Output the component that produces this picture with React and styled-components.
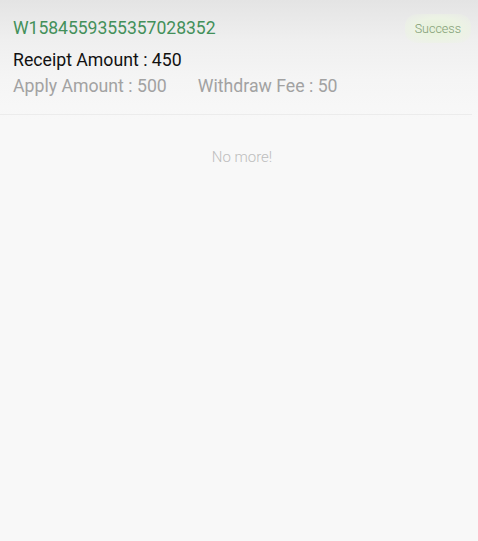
import styled, { createGlobalStyle } from "styled-components";

const GlobalStyle = createGlobalStyle`
  html, body {
    margin: 0;
    padding: 0;
    background: #f8f8f8;
  }
  body {
    font-family: Roboto, "Liberation Sans", sans-serif;
  }
`;

const Page = styled.div`
  width: 478px;
  height: 541px;
  background: linear-gradient(to bottom, #e4e4e4 0px, #efefef 40px, #f5f5f5 80px, #f8f8f8 120px);
  overflow: hidden;
`;

const Card = styled.div`
  margin-right: 6px;
  padding: 16px 0 15px 13px;
  border-bottom: 1px solid #ececec;
`;

const TopRow = styled.div`
  display: flex;
  align-items: center;
  justify-content: space-between;
  height: 24px;
`;

const OrderNo = styled.div`
  font-size: 17.6px;
  color: #43905a;
  letter-spacing: -0.05px;
`;

const Badge = styled.div`
  font-size: 12.5px;
  font-weight: 300;
  color: #7f9b73;
  padding: 7px 10px;
  margin-right: 1px;
  border-radius: 12px;
  background: radial-gradient(ellipse at center, #e5f1d9 0%, #ecf3e4 50%, rgba(238, 241, 235, 0) 100%);
`;

const Line = styled.div`
  display: flex;
  gap: 31px;
  margin-top: ${(p) => p.$top || 0}px;
  font-size: 17.7px;
  line-height: 26px;
  color: ${(p) => (p.$muted ? "#a2a2a2" : "#111")};
`;

const Footer = styled.div`
  text-align: center;
  padding-top: 33px;
  font-size: 15px;
  font-weight: 300;
  color: #bdbdbd;
  margin-left: 6px;
`;

export default function App() {
  return (
    <Page>
      <GlobalStyle />
      <Card>
        <TopRow>
          <OrderNo>W1584559355357028352</OrderNo>
          <Badge>Success</Badge>
        </TopRow>
        <Line $top={7}>Receipt Amount : 450</Line>
        <Line $muted>
          <span>Apply Amount : 500</span>
          <span>Withdraw Fee : 50</span>
        </Line>
      </Card>
      <Footer>No more!</Footer>
    </Page>
  );
}
